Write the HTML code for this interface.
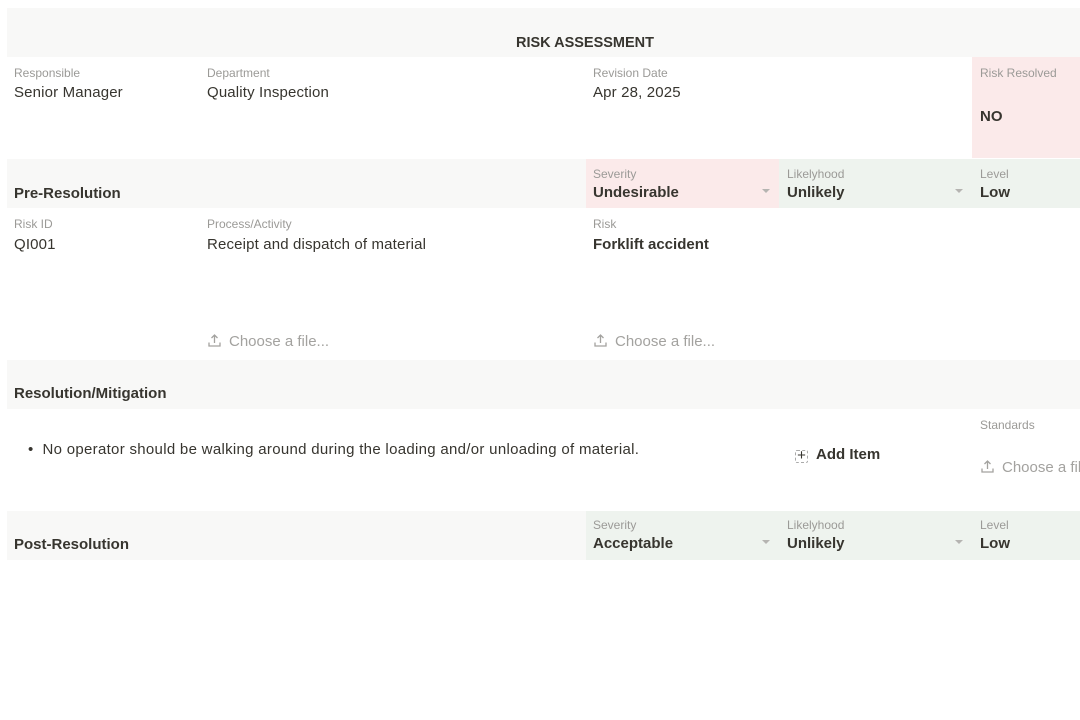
<!DOCTYPE html>
<html><head><meta charset="utf-8"><style>
*{margin:0;padding:0;box-sizing:border-box}
body{width:1080px;height:720px;background:#fff;font-family:"Liberation Sans",sans-serif;color:#37352f;position:relative;overflow:hidden}
.a{position:absolute}
.bar{position:absolute;left:7px;right:0;background:#f8f8f7}
.l{position:absolute;font-size:12px;color:#9b9a97;white-space:nowrap}
.v{position:absolute;font-size:15px;letter-spacing:.15px;color:#37352f;white-space:nowrap;line-height:17px}
.b{font-weight:bold;letter-spacing:0}
.f{position:absolute;font-size:15px;color:#a3a29f;white-space:nowrap;line-height:17px}
.f svg{vertical-align:-2px;margin-right:7px}
.car{position:absolute;width:0;height:0;border-left:4px solid transparent;border-right:4px solid transparent;border-top:4px solid #b5b4b1}
</style></head><body>
<div class="bar" style="top:8px;height:49px"></div>
<div class="v b" style="left:0;width:1170px;text-align:center;top:35px;font-size:14.5px">RISK ASSESSMENT</div>
<div class="a" style="left:972px;top:57px;width:108px;height:101px;background:#fbeaea"></div>
<div class="l" style="left:14px;top:66px">Responsible</div><div class="v" style="left:14px;top:84px">Senior Manager</div>
<div class="l" style="left:207px;top:66px">Department</div><div class="v" style="left:207px;top:84px">Quality Inspection</div>
<div class="l" style="left:593px;top:66px">Revision Date</div><div class="v" style="left:593px;top:84px">Apr 28, 2025</div>
<div class="l" style="left:980px;top:66px">Risk Resolved</div><div class="v b" style="left:980px;top:108px">NO</div>

<div class="bar" style="top:159px;height:49px"></div>
<div class="a" style="left:586px;top:159px;width:193px;height:49px;background:#fbeaea"></div>
<div class="a" style="left:779px;top:159px;width:301px;height:49px;background:#eef3ee"></div>
<div class="v b" style="left:14px;top:185px">Pre-Resolution</div>
<div class="l" style="left:593px;top:167px">Severity</div><div class="v b" style="left:593px;top:184px">Undesirable</div><div class="car" style="left:762px;top:189px"></div>
<div class="l" style="left:787px;top:167px">Likelyhood</div><div class="v b" style="left:787px;top:184px">Unlikely</div><div class="car" style="left:955px;top:189px"></div>
<div class="l" style="left:980px;top:167px">Level</div><div class="v b" style="left:980px;top:184px">Low</div>

<div class="l" style="left:14px;top:217px">Risk ID</div><div class="v" style="left:14px;top:236px">QI001</div>
<div class="l" style="left:207px;top:217px">Process/Activity</div><div class="v" style="left:207px;top:236px">Receipt and dispatch of material</div>
<div class="l" style="left:593px;top:217px">Risk</div><div class="v b" style="left:593px;top:236px">Forklift accident</div>
<div class="f" style="left:207px;top:333px"><svg width="15" height="15" viewBox="0 0 15 15" fill="none" stroke="#a3a29f" stroke-width="1.3"><path d="M7.5 10V2M4.5 5l3-3 3 3M2 9.5v3.5h11V9.5"/></svg>Choose a file...</div>
<div class="f" style="left:593px;top:333px"><svg width="15" height="15" viewBox="0 0 15 15" fill="none" stroke="#a3a29f" stroke-width="1.3"><path d="M7.5 10V2M4.5 5l3-3 3 3M2 9.5v3.5h11V9.5"/></svg>Choose a file...</div>

<div class="bar" style="top:360px;height:49px"></div>
<div class="v b" style="left:14px;top:385px">Resolution/Mitigation</div>
<div class="v" style="left:28px;top:441px;letter-spacing:.3px">•&nbsp;&nbsp;No operator should be walking around during the loading and/or unloading of material.</div>
<div class="v b" style="left:795px;top:446px"><span style="display:inline-block;width:13px;height:13px;border:1px dashed #aaa;border-radius:2px;text-align:center;line-height:10px;font-weight:normal;margin-right:8px;vertical-align:-1px">+</span>Add Item</div>
<div class="l" style="left:980px;top:418px">Standards</div>
<div class="f" style="left:980px;top:459px"><svg width="15" height="15" viewBox="0 0 15 15" fill="none" stroke="#a3a29f" stroke-width="1.3"><path d="M7.5 10V2M4.5 5l3-3 3 3M2 9.5v3.5h11V9.5"/></svg>Choose a file...</div>

<div class="bar" style="top:511px;height:49px"></div>
<div class="a" style="left:586px;top:511px;width:494px;height:49px;background:#eef3ee"></div>
<div class="v b" style="left:14px;top:536px">Post-Resolution</div>
<div class="l" style="left:593px;top:518px">Severity</div><div class="v b" style="left:593px;top:535px">Acceptable</div><div class="car" style="left:762px;top:540px"></div>
<div class="l" style="left:787px;top:518px">Likelyhood</div><div class="v b" style="left:787px;top:535px">Unlikely</div><div class="car" style="left:955px;top:540px"></div>
<div class="l" style="left:980px;top:518px">Level</div><div class="v b" style="left:980px;top:535px">Low</div>
</body></html>
